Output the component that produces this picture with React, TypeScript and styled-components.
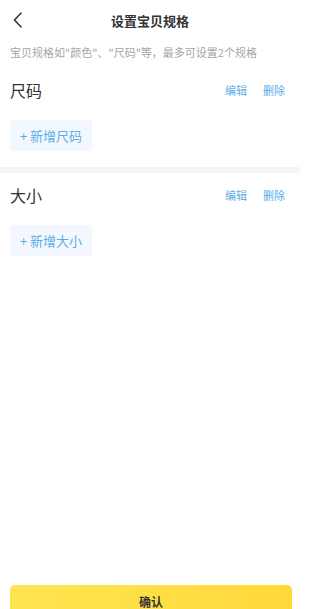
import * as React from 'react';
import styled, { createGlobalStyle } from 'styled-components';

interface Spec {
  id: number;
  name: string;
}

const specs: Spec[] = [
  { id: 1, name: '尺码' },
  { id: 2, name: '大小' },
];

const GlobalStyle = createGlobalStyle`
  html, body {
    margin: 0;
    padding: 0;
    background: #fff;
    overflow: hidden;
  }
  body {
    font-family: "Noto Sans CJK SC", "Noto Sans", sans-serif;
    color: #333;
  }
`;

const App = () => (
  <Page>
    <GlobalStyle />
    <NavBar>
      <BackButton aria-label="返回">
        <svg width="11" height="16" viewBox="0 0 11 16">
          <polyline
            points="9,1 2.5,8 9,15"
            fill="none"
            stroke="#333"
            strokeWidth="1.6"
            strokeLinecap="round"
            strokeLinejoin="round"
          />
        </svg>
      </BackButton>
      <Title>设置宝贝规格</Title>
    </NavBar>
    <Main>
      <Hint>宝贝规格如"颜色"、"尺码"等，最多可设置2个规格</Hint>
      {specs.map((spec, i) => (
        <React.Fragment key={spec.id}>
          {i > 0 && <Divider />}
          <SpecSection spec={spec} />
        </React.Fragment>
      ))}
    </Main>
    <Footer>
      <ConfirmButton>确认</ConfirmButton>
    </Footer>
  </Page>
);

const SpecSection = ({ spec }: { spec: Spec }) => (
  <Section>
    <SectionHead>
      <SectionName>{spec.name}</SectionName>
      <Actions>
        <TextLink>编辑</TextLink>
        <TextLink>删除</TextLink>
      </Actions>
    </SectionHead>
    <AddButton>+ 新增{spec.name}</AddButton>
  </Section>
);

const Page = styled.div`
  display: flex;
  flex-direction: column;
  width: 300px;
  height: calc(100vh + 8px);
`;

const NavBar = styled.header`
  position: relative;
  display: flex;
  align-items: center;
  justify-content: center;
  height: 40px;
`;

const BackButton = styled.a`
  position: absolute;
  left: 12px;
  top: 12px;
  display: flex;
`;

const Title = styled.h1`
  margin: 0;
  font-size: 13px;
  font-weight: 700;
  color: #333;
`;

const Main = styled.main`
  flex: 1;
`;

const Hint = styled.p`
  margin: 0;
  padding: 4px 10px 8px;
  font-size: 11px;
  line-height: 16px;
  color: #a6a6a6;
  white-space: nowrap;
`;

const Section = styled.section`
  padding: 0 10px 16px;
`;

const SectionHead = styled.div`
  display: flex;
  align-items: center;
  justify-content: space-between;
  height: 44px;
`;

const SectionName = styled.h2`
  margin: 0;
  font-size: 16px;
  font-weight: 400;
  color: #333;
`;

const Actions = styled.div`
  display: flex;
  gap: 16px;
  padding-right: 5px;
`;

const TextLink = styled.a`
  font-size: 11px;
  color: #5aaee8;
`;

const AddButton = styled.button`
  display: flex;
  align-items: center;
  justify-content: center;
  width: 82px;
  height: 31px;
  margin-top: 8px;
  padding: 0;
  border: none;
  border-radius: 3px;
  background: #f3f8fe;
  font-family: inherit;
  font-size: 13px;
  color: #5aaee8;
`;

const Divider = styled.div`
  height: 6px;
  background: #f5f5f5;
`;

const Footer = styled.footer`
  padding: 0 8px 0 10px;
`;

const ConfirmButton = styled.button`
  display: block;
  width: 100%;
  height: 32px;
  border: none;
  border-radius: 5px 5px 0 0;
  background: linear-gradient(90deg, #ffe552, #ffd93a);
  font-family: inherit;
  font-size: 12px;
  font-weight: 700;
  color: #333;
`;

export default App;
